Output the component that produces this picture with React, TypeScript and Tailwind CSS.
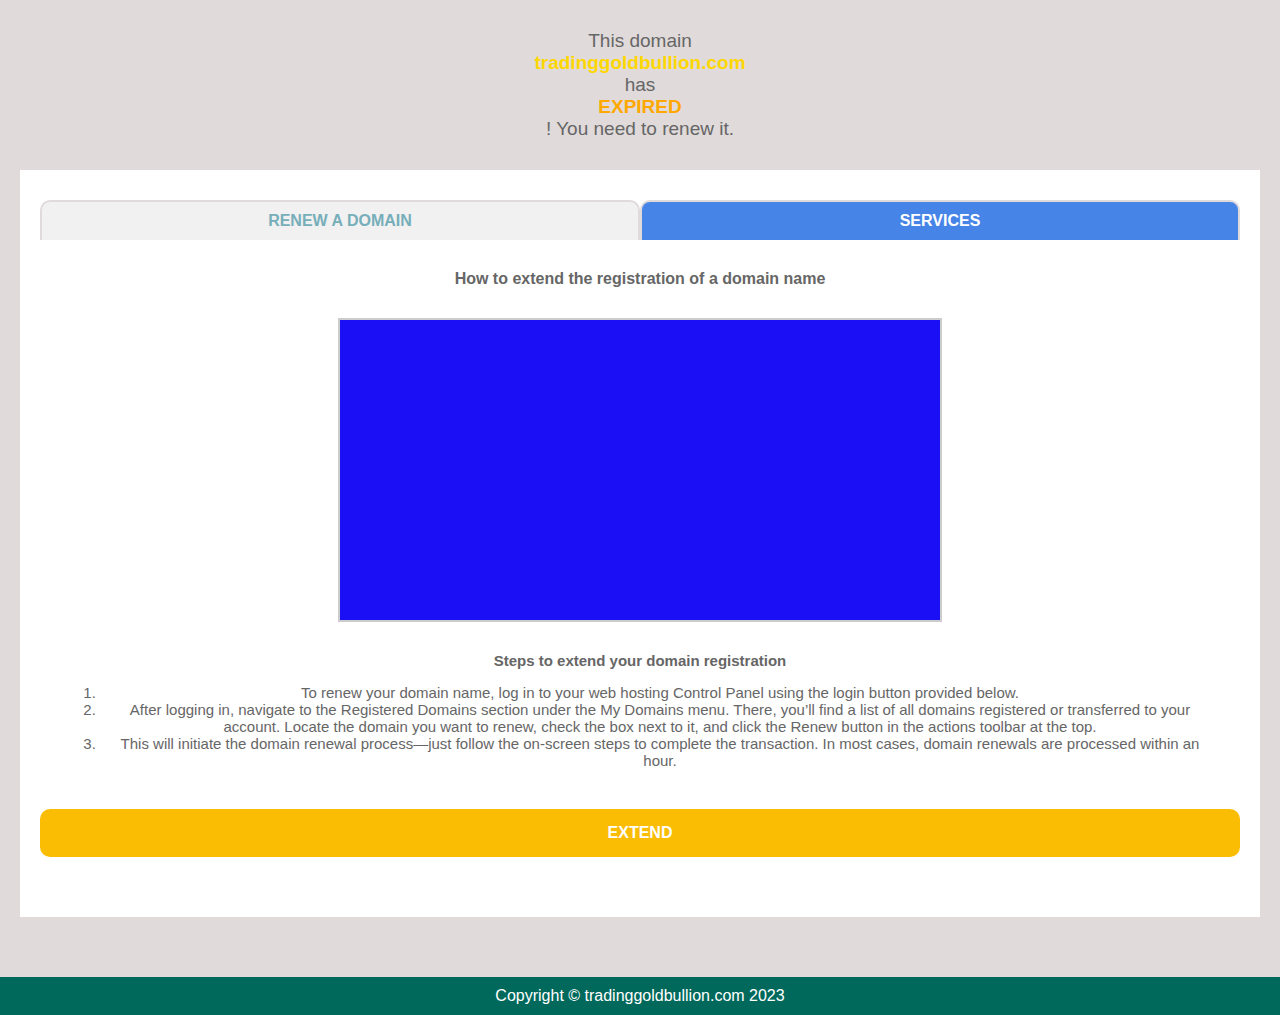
const steps = [
  'To renew your domain name, log in to your web hosting Control Panel using the login button provided below.',
  'After logging in, navigate to the Registered Domains section under the My Domains menu. There, you’ll find a list of all domains registered or transferred to your account. Locate the domain you want to renew, check the box next to it, and click the Renew button in the actions toolbar at the top.',
  'This will initiate the domain renewal process—just follow the on-screen steps to complete the transaction. In most cases, domain renewals are processed within an hour.',
];

export default function App() {
  return (
    <div className="flex min-h-screen flex-col bg-[#e0dada] text-center font-['Liberation_Sans',Arial,sans-serif] text-[#666]">
      <header className="flex flex-col items-center py-[30px] text-[19px] leading-[22px]">
        <span>This domain</span>
        <strong className="text-[#ffd700]">tradinggoldbullion.com</strong>
        <span>has</span>
        <strong className="text-[#ffa800]">EXPIRED</strong>
        <span>! You need to renew it.</span>
      </header>

      <main className="mx-5 bg-white px-5 pt-[30px] pb-[60px]">
        <nav className="grid grid-cols-2 text-base font-bold">
          <button type="button" className="h-10 rounded-t-[10px] border-2 border-b-0 border-[#e0dada] bg-[#f1f1f1] text-[#76aeb9]">
            RENEW A DOMAIN
          </button>
          <button type="button" className="h-10 rounded-t-[10px] border-2 border-b-0 border-[#e0dada] bg-[#4684e7] text-white">
            SERVICES
          </button>
        </nav>

        <section>
          <h1 className="mt-[30px] text-base leading-[18px] font-bold">How to extend the registration of a domain name</h1>
          <div className="mx-auto mt-[30px] h-[304px] w-full max-w-[604px] border-2 border-[#ccc] bg-[#1b10f5]" />
          <h2 className="mt-[30px] text-[15px] leading-[17px] font-bold">Steps to extend your domain registration</h2>
          <ol className="mx-5 mt-[15px] list-decimal pl-10 text-[15px] leading-[17px]">
            {steps.map((step) => (
              <li key={step} className="px-2">
                {step}
              </li>
            ))}
          </ol>
        </section>

        <button type="button" className="mt-10 h-12 w-full rounded-[10px] bg-[#fabd03] text-base font-bold text-white">
          EXTEND
        </button>
      </main>

      <footer className="mt-[60px] bg-[#00695c] py-[10px] text-base leading-[18px] text-white">
        Copyright © tradinggoldbullion.com 2023
      </footer>
    </div>
  );
}
